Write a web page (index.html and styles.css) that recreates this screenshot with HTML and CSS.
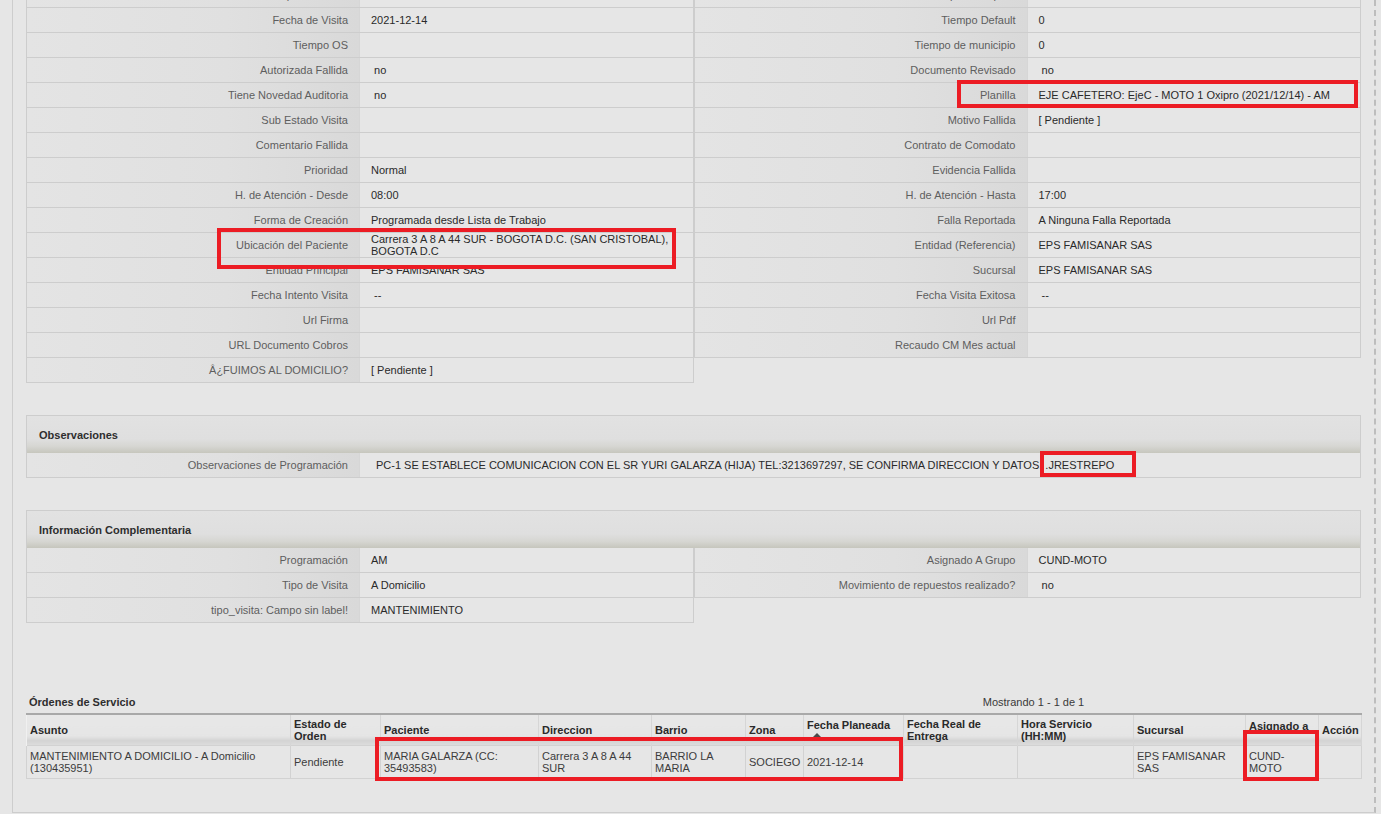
FILE: index.html
```html
<!DOCTYPE html>
<html lang="es">
<head>
  <meta charset="UTF-8" />
  <title>Detalle de Visita</title>
  <link rel="stylesheet" href="styles.css">
</head>
<body>

  <div class="page">

    <div class="pair top">
      <div class="ficha">
        <div class="row"><div class="lbl">Tiempo Estimado</div><div class="val"></div></div>
        <div class="row"><div class="lbl">Fecha de Visita</div><div class="val">2021-12-14</div></div>
        <div class="row"><div class="lbl">Tiempo OS</div><div class="val"></div></div>
        <div class="row"><div class="lbl">Autorizada Fallida</div><div class="val">&nbsp;no</div></div>
        <div class="row"><div class="lbl">Tiene Novedad Auditoria</div><div class="val">&nbsp;no</div></div>
        <div class="row"><div class="lbl">Sub Estado Visita</div><div class="val"></div></div>
        <div class="row"><div class="lbl">Comentario Fallida</div><div class="val"></div></div>
        <div class="row"><div class="lbl">Prioridad</div><div class="val">Normal</div></div>
        <div class="row"><div class="lbl">H. de Atención - Desde</div><div class="val">08:00</div></div>
        <div class="row"><div class="lbl">Forma de Creación</div><div class="val">Programada desde Lista de Trabajo</div></div>
        <div class="row"><div class="lbl">Ubicación del Paciente</div><div class="val">Carrera 3 A 8 A 44 SUR - BOGOTA D.C. (SAN CRISTOBAL), BOGOTA D.C</div></div>
        <div class="row"><div class="lbl">Entidad Principal</div><div class="val">EPS FAMISANAR SAS</div></div>
        <div class="row"><div class="lbl">Fecha Intento Visita</div><div class="val">&nbsp;--</div></div>
        <div class="row"><div class="lbl">Url Firma</div><div class="val"></div></div>
        <div class="row"><div class="lbl">URL Documento Cobros</div><div class="val"></div></div>
        <div class="row"><div class="lbl">Â¿FUIMOS AL DOMICILIO?</div><div class="val">[ Pendiente ]</div></div>
      </div>

      <div class="ficha">
        <div class="row"><div class="lbl">Tiempo de Espera</div><div class="val"></div></div>
        <div class="row"><div class="lbl">Tiempo Default</div><div class="val">0</div></div>
        <div class="row"><div class="lbl">Tiempo de municipio</div><div class="val">0</div></div>
        <div class="row"><div class="lbl">Documento Revisado</div><div class="val">&nbsp;no</div></div>
        <div class="row"><div class="lbl">Planilla</div><div class="val">EJE CAFETERO: EjeC - MOTO 1 Oxipro (2021/12/14) - AM</div></div>
        <div class="row"><div class="lbl">Motivo Fallida</div><div class="val">[ Pendiente ]</div></div>
        <div class="row"><div class="lbl">Contrato de Comodato</div><div class="val"></div></div>
        <div class="row"><div class="lbl">Evidencia Fallida</div><div class="val"></div></div>
        <div class="row"><div class="lbl">H. de Atención - Hasta</div><div class="val">17:00</div></div>
        <div class="row"><div class="lbl">Falla Reportada</div><div class="val">A Ninguna Falla Reportada</div></div>
        <div class="row"><div class="lbl">Entidad (Referencia)</div><div class="val">EPS FAMISANAR SAS</div></div>
        <div class="row"><div class="lbl">Sucursal</div><div class="val">EPS FAMISANAR SAS</div></div>
        <div class="row"><div class="lbl">Fecha Visita Exitosa</div><div class="val">&nbsp;--</div></div>
        <div class="row"><div class="lbl">Url Pdf</div><div class="val"></div></div>
        <div class="row"><div class="lbl">Recaudo CM Mes actual</div><div class="val"></div></div>
      </div>
    </div>

    <div class="section obs">
      <div class="section-head">Observaciones</div>
      <div class="ficha">
        <div class="row wide">
          <div class="lbl">Observaciones de Programación</div>
          <div class="val long">PC-1 SE ESTABLECE COMUNICACION CON EL SR YURI GALARZA (HIJA) TEL:3213697297, SE CONFIRMA DIRECCION Y DATOS. .JRESTREPO</div>
        </div>
      </div>
    </div>

    <div class="section info">
      <div class="section-head">Información Complementaria</div>
      <div class="pair">
        <div class="ficha">
          <div class="row"><div class="lbl">Programación</div><div class="val">AM</div></div>
          <div class="row"><div class="lbl">Tipo de Visita</div><div class="val">A Domicilio</div></div>
          <div class="row"><div class="lbl">tipo_visita: Campo sin label!</div><div class="val">MANTENIMIENTO</div></div>
        </div>
        <div class="ficha">
          <div class="row"><div class="lbl">Asignado A Grupo</div><div class="val">CUND-MOTO</div></div>
          <div class="row"><div class="lbl">Movimiento de repuestos realizado?</div><div class="val">&nbsp;no</div></div>
        </div>
      </div>
    </div>

    <div class="orders">
      <div class="orders-title">
        <div class="orders-name">Órdenes de Servicio</div>
        <div class="orders-count">Mostrando 1 - 1 de 1</div>
      </div>
      <table>
        <colgroup>
          <col style="width:264px"><col style="width:90px"><col style="width:158px"><col style="width:113px">
          <col style="width:94px"><col style="width:58px"><col style="width:100px"><col style="width:114px">
          <col style="width:116px"><col style="width:112px"><col style="width:73px"><col style="width:43px">
        </colgroup>
        <thead>
          <tr>
            <th>Asunto</th>
            <th>Estado de Orden</th>
            <th>Paciente</th>
            <th>Direccion</th>
            <th>Barrio</th>
            <th>Zona</th>
            <th class="sorted">Fecha Planeada<span class="caret"></span></th>
            <th>Fecha Real de Entrega</th>
            <th>Hora Servicio (HH:MM)</th>
            <th>Sucursal</th>
            <th class="top-text">Asignado a</th>
            <th>Acción</th>
          </tr>
        </thead>
        <tbody>
          <tr>
            <td>MANTENIMIENTO A DOMICILIO - A Domicilio (130435951)</td>
            <td>Pendiente</td>
            <td>MARIA GALARZA (CC: 35493583)</td>
            <td>Carrera 3 A 8 A 44 SUR</td>
            <td>BARRIO LA MARIA</td>
            <td>SOCIEGO</td>
            <td>2021-12-14</td>
            <td></td>
            <td></td>
            <td>EPS FAMISANAR SAS</td>
            <td>CUND-MOTO</td>
            <td></td>
          </tr>
        </tbody>
      </table>
    </div>

  </div>

  <!-- marcas de revision -->
  <div class="mark m-planilla"></div>
  <div class="mark m-ubicacion"></div>
  <div class="mark m-usuario"></div>
  <div class="mark m-paciente"></div>
  <div class="mark m-asignado"></div>

</body>
</html>
```

FILE: styles.css
```css
* {
  box-sizing: border-box;
  margin: 0;
  padding: 0;
}

body {
  background: #e6e6e6;
  font-family: "Liberation Sans", Arial, sans-serif;
  font-size: 11px;
  color: #2a2a2a;
  overflow: hidden;
}

.page {
  display: flow-root;
  width: 1364px;
  height: 813px;
  margin-left: 12px;
  padding: 0 13px;
  border-left: 1px solid #cdcdcd;
  border-right: 2px dashed #bdbdbd;
  border-bottom: 1px solid #cdcdcd;
}

.pair {
  display: grid;
  grid-template-columns: 668px 667px;
  align-items: start;
}

.pair.top {
  margin-top: -17px;
}

.ficha {
  border-left: 1px solid #cdcdcd;
  border-right: 1px solid #cdcdcd;
}

.row {
  display: flex;
  height: 25px;
  border-bottom: 1px solid #cdcdcd;
}

.lbl {
  width: 50%;
  display: flex;
  align-items: center;
  justify-content: flex-end;
  padding: 0 11px;
  color: #5e5e5e;
  text-align: right;
  background: linear-gradient(to right, #e4e4e4 0%, #e0e0e0 60%, #d9d9d9 100%);
  border-right: 1px solid #d6d6d6;
}

.val {
  flex: 1;
  display: flex;
  align-items: center;
  padding: 0 11px;
  line-height: 12px;
  background: #e6e6e6;
}

.row.wide .lbl {
  width: 333px;
}

.val.long {
  padding-left: 16px;
}

.section {
  margin-top: 32px;
}

.section-head {
  height: 38px;
  display: flex;
  align-items: center;
  padding-left: 12px;
  font-weight: bold;
  color: #2e2e2e;
  border: 1px solid #cdcdcd;
  border-bottom: 0;
  background: linear-gradient(to bottom, #e2e2e2 0%, #dfdfdf 62%, #d6d6d2 82%, #c6c6bd 100%);
}

.orders {
  margin-top: 70px;
}

.orders-title {
  display: flex;
  height: 20px;
  align-items: center;
  padding-bottom: 2px;
}

.orders-name {
  flex: 1;
  padding-left: 3px;
  font-weight: bold;
  color: #2e2e2e;
}

.orders-count {
  width: 667px;
  padding-left: 12px;
  text-align: center;
  color: #3a3a3a;
}

.orders table {
  width: 1335px;
  table-layout: fixed;
  border-collapse: collapse;
  border-top: 2px solid #a9a9a9;
}

.orders th {
  height: 31px;
  padding: 0 3px;
  text-align: left;
  vertical-align: middle;
  line-height: 12px;
  font-weight: bold;
  color: #2a2a2a;
  border-right: 1px solid #d6d6d6;
  border-left: 1px solid #f0f0f0;
  background: linear-gradient(to bottom, #e8e8e8 0%, #e5e5e5 70%, #d3d3d3 86%, #dcdcdc 100%);
}

.orders th.sorted {
  vertical-align: top;
  padding-top: 4px;
}

.caret {
  display: block;
  width: 0;
  height: 0;
  margin: 2px 0 0 6px;
  border-left: 4px solid transparent;
  border-right: 4px solid transparent;
  border-bottom: 4px solid #4a4a4a;
}

.orders th.top-text {
  vertical-align: top;
  padding-top: 5px;
}

.orders td {
  height: 33px;
  padding: 0 3px;
  vertical-align: middle;
  line-height: 12px;
  color: #3c3c3c;
  border: 1px solid #d2d2d2;
  background: #e6e6e6;
}

.mark {
  position: absolute;
  border: 4px solid #ec1c24;
}

.m-planilla {
  left: 957px;
  top: 80px;
  width: 401px;
  height: 28px;
}

.m-ubicacion {
  left: 217px;
  top: 228px;
  width: 459px;
  height: 41px;
}

.m-usuario {
  left: 1040px;
  top: 451px;
  width: 96px;
  height: 26px;
}

.m-paciente {
  left: 375px;
  top: 737px;
  width: 528px;
  height: 44px;
}

.m-asignado {
  left: 1243px;
  top: 730px;
  width: 76px;
  height: 51px;
}
```
